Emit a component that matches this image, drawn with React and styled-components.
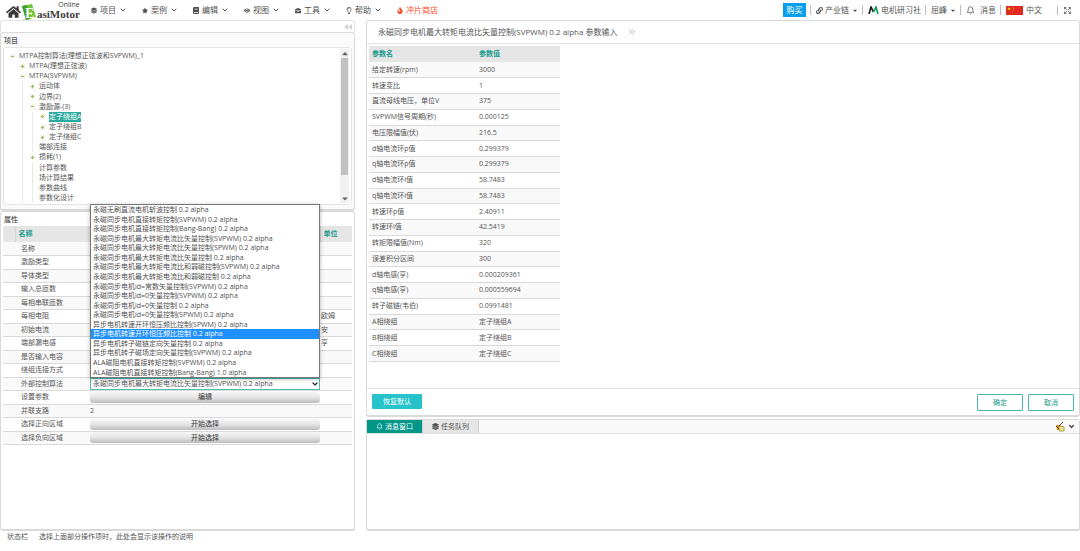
import { useState } from "react"
import styled, { createGlobalStyle, css } from "styled-components"
import { FaHome, FaStar, FaEye, FaBriefcase, FaRegLightbulb, FaFire, FaLayerGroup, FaBook, FaLink, FaCaretDown, FaCaretUp } from "react-icons/fa"
import { FiBell, FiChevronDown, FiChevronsRight } from "react-icons/fi"
import { TbArrowsMaximize } from "react-icons/tb"

const GlobalStyle = createGlobalStyle`
  * {
    box-sizing: border-box;
  }
  body {
    margin: 0;
    background: #fff;
  }
  body, button, select {
    color: #555;
    font-family: "Open Sans", "Noto Sans CJK SC", sans-serif;
    font-size: 7px;
    line-height: 10px;
  }
  button {
    padding: 0;
    border: 0;
    background: none;
    cursor: pointer;
  }
  a {
    color: inherit;
    text-decoration: none;
  }
  ul {
    margin: 0;
    padding: 0;
    list-style: none;
  }
`

const Page = styled.div`
  display: flex;
  flex-direction: column;
  min-height: 100vh;
`

/* top bar */
const TopBar = styled.header`
  display: flex;
  align-items: center;
  height: 20px;
  padding: 0 8px 0 6px;
  font-size: 8px;
`
const Brand = styled.a`
  display: flex;
  align-items: center;
  width: 85px;
  height: 20px;
  color: #3b3b3b;
`
const HomeIcon = styled(FaHome)`
  flex: none;
  width: 15px;
  height: 16px;
  margin-top: 4px;
`
const BrandTile = styled.svg`
  flex: none;
  width: 16px;
  height: 17px;
  margin-top: 3px;
`
const BrandText = styled.span`
  display: flex;
  flex-direction: column;
  align-items: flex-end;
`
const BrandSub = styled.small`
  font-size: 7px;
  line-height: 8px;
`
const BrandName = styled.strong`
  font-family: "Liberation Serif", serif;
  font-size: 11px;
  line-height: 10px;
`
const Menu = styled.nav`
  display: flex;
  flex: 1;
`
const MenuItem = styled.button`
  display: flex;
  align-items: center;
  gap: 3px;
  width: 51px;
  height: 20px;
  font-size: 8px;
  white-space: nowrap;
  color: ${({ $hot }) => ($hot ? "#ff4a26" : "#505050")};
  svg {
    width: 6px;
    height: 7px;
  }
  svg:last-child:not(:first-child) {
    width: 8px;
    height: 8px;
    stroke-width: 3;
  }
`
const Tools = styled.div`
  display: flex;
  align-items: center;
`
const BuyButton = styled.button`
  width: 23px;
  height: 14px;
  margin-right: 4px;
  background: #0a9fe9;
  color: #fff;
  font-size: 8px;
`
const Tool = styled.a`
  display: flex;
  align-items: center;
  gap: ${({ $gap }) => $gap || 2}px;
  padding: 0 ${({ $wide }) => ($wide ? 15 : 4)}px 0 5px;
  border-left: 1px solid #bbb;
  line-height: 10px;
  white-space: nowrap;
  &:last-child {
    padding-right: 0;
  }
`
const Caret = styled(FaCaretDown)`
  width: 6px;
  height: 7px;
  margin-left: 1px;
`

/* frame */
const Main = styled.main`
  display: flex;
  flex: 1;
  gap: 11px;
`
const SideColumn = styled.div`
  display: flex;
  flex-direction: column;
  flex: 0 0 355px;
`
const WorkColumn = styled.div`
  display: flex;
  flex-direction: column;
  flex: 1;
  gap: 2px;
  min-width: 0;
`
const Panel = styled.section`
  display: flex;
  flex-direction: column;
  flex: ${({ $grow }) => ($grow ? `${$grow} 1 0` : "none")};
  border: 1px solid #d9d9d9;
  border-width: 1px 1px 2px;
  border-radius: 3px;
  background: ${({ $tint }) => ($tint ? "#fafafa" : "#fff")};
`
const CollapseBar = styled.div`
  display: flex;
  justify-content: flex-end;
  align-items: center;
  height: 12px;
  padding-right: 2px;
  border: 1px solid #e4e4e4;
  border-bottom: 0;
  border-radius: 3px 3px 0 0;
  button {
    display: flex;
  }
`
const PanelTitle = styled.h2`
  margin: 0;
  padding: 3px 3px 1px;
  font-size: 7px;
  font-weight: 500;
  line-height: 10px;
`

/* project tree */
const TreeBox = styled.div`
  display: flex;
  justify-content: space-between;
  margin: 0 2px 4px;
  padding: 1px 2px 1px 5px;
  border: 1px solid #e6e6e6;
  border-radius: 3px;
  background: #fff;
`
const Tree = styled.ul`
  display: flex;
  flex-direction: column;
  height: 154px;
  padding-top: 2px;
`
const TreeRow = styled.li`
  display: flex;
  flex: 1;
  align-items: center;
  line-height: 10px;
  white-space: nowrap;
`
const Guide = styled.span`
  align-self: stretch;
  width: 10px;
  background: ${({ $line }) => ($line ? "linear-gradient(#e8e8e8, #e8e8e8) 3px 0 / 1px 100% no-repeat" : "none")};
`
const Toggle = styled.button`
  display: flex;
  width: 10px;
`
const TreeLabel = styled.span`
  ${({ $selected }) =>
    $selected &&
    css`
      background: #2ba99c;
      color: #fff;
    `}
`
const ScrollTrack = styled.div`
  display: flex;
  flex-direction: column;
  align-items: center;
  width: 9px;
  background: #f1f1f1;
  svg {
    width: 6px;
    height: 9px;
    color: #666;
  }
`
const ScrollThumb = styled.div`
  flex: 0 0 117px;
  width: 7px;
  margin-bottom: auto;
  background: #c1c1c1;
`

/* data tables */
const DataTable = styled.table`
  border-collapse: collapse;
  table-layout: fixed;
  th {
    height: 16px;
    padding: 0;
    background: #e5e5e5;
    color: #159a8c;
    font-weight: 700;
    text-align: left;
  }
  td {
    height: 13px;
    padding: 0;
    border-bottom: 1px solid #d9d9d9;
    line-height: 10px;
    white-space: nowrap;
  }
  tbody tr:nth-child(odd) {
    background: #f9f9f9;
  }
`
const PropTable = styled(DataTable)`
  width: calc(100% - 4px);
  height: 219px;
  margin: 0 2px;
  th {
    padding-left: 3px;
    border-left: 1px solid #d6d6d6;
  }
  th:first-child {
    border-left: 0;
  }
  td:nth-child(2) {
    padding-left: 6px;
  }
  td:last-child {
    padding-left: 1px;
  }
`
const ParamTable = styled(DataTable)`
  width: 191px;
  height: 316px;
  margin: 2px;
  th, td {
    padding-left: 3px;
  }
`
const GreyButton = styled.button`
  display: block;
  width: 230px;
  height: 11px;
  border-radius: 3px;
  background: linear-gradient(#f6f6f6, #e4e4e4 50%, #bdbdbd);
  color: #333;
`
const SelectWrap = styled.div`
  position: relative;
  display: flex;
  align-items: center;
  width: 230px;
`
const Select = styled.select`
  width: 100%;
  height: 12px;
  padding: 0 2px;
  border: 1px solid #4dbdb0;
  border-radius: 0;
  outline: 0;
  background: #fff;
  line-height: 10px;
  appearance: none;
`
const SelectArrow = styled(FiChevronDown)`
  position: absolute;
  right: 1px;
  width: 8px;
  height: 8px;
  stroke-width: 4;
  color: #333;
  pointer-events: none;
`
const OptionList = styled.ul`
  position: absolute;
  z-index: 2;
  bottom: 100%;
  left: 0;
  display: flex;
  flex-direction: column;
  width: 100%;
  height: 174px;
  border: 1px solid #777;
  background: #fff;
  box-shadow: 0 1px 4px rgba(0, 0, 0, 0.3);
`
const OptionRow = styled.li`
  display: flex;
  flex: 1;
  align-items: center;
  padding: 0 2px;
  line-height: 9px;
  background: ${({ $active }) => ($active ? "#1e90ff" : "transparent")};
  color: ${({ $active }) => ($active ? "#fff" : "#505050")};
`

/* parameter dialog */
const DialogTitle = styled.h1`
  display: flex;
  align-items: center;
  gap: 10px;
  height: 23px;
  margin: 0;
  padding: 0 11px;
  border-bottom: 1px solid #e4e4e4;
  font-size: 8px;
  font-weight: 400;
  svg {
    width: 10px;
    height: 10px;
    color: #aaa;
  }
`
const DialogFoot = styled.footer`
  display: flex;
  gap: 5px;
  align-items: flex-start;
  height: 27px;
  margin-top: auto;
  padding: 5px;
  border-top: 1px solid #e4e4e4;
`
const ResetButton = styled.button`
  width: 50px;
  height: 15px;
  margin-right: auto;
  border-radius: 1px;
  background: #26c3cb;
  color: #fff;
`
const OutlineButton = styled.button`
  width: 46px;
  height: 17px;
  border: 1px solid #4db6ac;
  border-radius: 1px;
  color: #159a8c;
`

/* message window */
const TabBar = styled.div`
  display: flex;
  align-items: center;
  height: 14px;
  padding-right: 4px;
  border-bottom: 1px solid #e0e0e0;
  background: #f9f9f9;
`
const Tab = styled.button`
  display: flex;
  align-items: center;
  justify-content: center;
  gap: 2px;
  width: 56px;
  height: 13px;
  border-right: 1px solid #d0d0d0;
  background: ${({ $active }) => ($active ? "#009688" : "#e6e6e6")};
  color: ${({ $active }) => ($active ? "#fff" : "#505050")};
  svg {
    width: 7px;
    height: 7px;
  }
`
const TabTools = styled.div`
  display: flex;
  gap: 3px;
  margin-left: auto;
  button {
    display: flex;
    align-items: center;
  }
`
const StatusBar = styled.footer`
  display: flex;
  gap: 11px;
  height: 20px;
  padding: 0 7px;
  line-height: 11px;
`

const menus = [
  { icon: FaLayerGroup, label: "项目" },
  { icon: FaStar, label: "案例" },
  { icon: FaBook, label: "编辑" },
  { icon: FaEye, label: "视图" },
  { icon: FaBriefcase, label: "工具" },
  { icon: FaRegLightbulb, label: "帮助" },
]

// depth, label, toggle sign
const treeRows = [
  [0, "MTPA控制算法(理想正弦波和SVPWM)_1", "-"],
  [1, "MTPA(理想正弦波)", "+"],
  [1, "MTPA(SVPWM)", "-"],
  [2, "运动体", "+"],
  [2, "边界(2)", "+"],
  [2, "激励源-(3)", "-"],
  [3, "定子绕组A", "+"],
  [3, "定子绕组B", "+"],
  [3, "定子绕组C", "+"],
  [2, "端部连接"],
  [2, "损耗(1)", "+"],
  [2, "计算参数"],
  [2, "场计算结果"],
  [2, "参数曲线"],
  [2, "参数化设计"],
]

const algorithms = [
  "永磁无刷直流电机斩波控制 0.2 alpha",
  "永磁同步电机直接转矩控制(SVPWM) 0.2 alpha",
  "永磁同步电机直接转矩控制(Bang-Bang) 0.2 alpha",
  "永磁同步电机最大转矩电流比矢量控制(SVPWM) 0.2 alpha",
  "永磁同步电机最大转矩电流比矢量控制(SPWM) 0.2 alpha",
  "永磁同步电机最大转矩电流比矢量控制 0.2 alpha",
  "永磁同步电机最大转矩电流比和弱磁控制(SVPWM) 0.2 alpha",
  "永磁同步电机最大转矩电流比和弱磁控制 0.2 alpha",
  "永磁同步电机id=常数矢量控制(SVPWM) 0.2 alpha",
  "永磁同步电机id=0矢量控制(SVPWM) 0.2 alpha",
  "永磁同步电机id=0矢量控制 0.2 alpha",
  "永磁同步电机id=0矢量控制(SPWM) 0.2 alpha",
  "异步电机转速开环恒压频比控制(SPWM) 0.2 alpha",
  "异步电机转速开环恒压频比控制 0.2 alpha",
  "异步电机转子磁链定向矢量控制 0.2 alpha",
  "异步电机转子磁场定向矢量控制(SVPWM) 0.2 alpha",
  "ALA磁阻电机直接转矩控制(SVPWM) 0.2 alpha",
  "ALA磁阻电机直接转矩控制(Bang-Bang) 1.0 alpha",
]

const props = [
  { name: "名称" },
  { name: "激励类型" },
  { name: "导体类型" },
  { name: "输入总匝数" },
  { name: "每相串联匝数" },
  { name: "每相电阻", unit: "欧姆" },
  { name: "初始电流", unit: "安" },
  { name: "端部漏电感", unit: "亨" },
  { name: "是否输入电容" },
  { name: "绕组连接方式" },
  { name: "外部控制算法", kind: "select" },
  { name: "设置参数", kind: "button", value: "编辑" },
  { name: "并联支路", value: "2" },
  { name: "选择正向区域", kind: "button", value: "开始选择" },
  { name: "选择负向区域", kind: "button", value: "开始选择" },
]

const params = [
  ["给定转速(rpm)", "3000"],
  ["转速变比", "1"],
  ["直流母线电压，单位V", "375"],
  ["SVPWM信号周期(秒)", "0.000125"],
  ["电压限幅值(伏)", "216.5"],
  ["d轴电流环p值", "0.299379"],
  ["q轴电流环p值", "0.299379"],
  ["d轴电流环i值", "58.7483"],
  ["q轴电流环i值", "58.7483"],
  ["转速环p值", "2.40911"],
  ["转速环i值", "42.5419"],
  ["转矩限幅值(Nm)", "320"],
  ["误差积分区间", "300"],
  ["d轴电感(亨)", "0.000209361"],
  ["q轴电感(亨)", "0.000559694"],
  ["转子磁链(韦伯)", "0.0991481"],
  ["A相绕组", "定子绕组A"],
  ["B相绕组", "定子绕组B"],
  ["C相绕组", "定子绕组C"],
]

const Logo = () => (
  <Brand href="#home">
    <HomeIcon />
    <BrandTile viewBox="0 0 16 17">
      <path d="M1 3 11 1l4 13-10 3z" fill="#6cc33c" />
      <path d="M1 3 6 2l3 14-4 1z" fill="#3fa02c" />
      <text x="4" y="15" fill="#fff" fontFamily="Liberation Serif" fontSize="14" fontWeight="700">E</text>
    </BrandTile>
    <BrandText>
      <BrandSub>Online</BrandSub>
      <BrandName>asiMotor</BrandName>
    </BrandText>
  </Brand>
)

const CommunityMark = () => (
  <svg width="11" height="8" viewBox="0 0 11 8" fill="none" strokeWidth="1.700">
    <path d="M1 8 3 1l2.500 5" stroke="#222" />
    <path d="M5.500 6 8 1l2 7" stroke="#12a05c" />
  </svg>
)

const Flag = () => (
  <svg width="17" height="9" viewBox="0 0 17 9">
    <path d="M0 0h17v9H0z" fill="#de2a20" />
    <path d="m3 1 .5 1.200h1.300l-1 .8.4 1.300L3 3.500l-1.200.8.4-1.300-1-.8h1.300z" fill="#ffde00" />
    <path d="M6 1h.7v.7H6zM7 2.200h.7v.7H7zM7 3.600h.7v.7H7zM6 4.700h.7v.7H6z" fill="#ffb300" />
  </svg>
)

const Sign = ({ open }) => (
  <svg width="7" height="7" viewBox="0 0 7 7">
    <path d="M1 1h5v5H1z" fill="#f1f3ec" />
    <path d={open ? "M2 3.500h3" : "M2 3.500h3M3.500 2v3"} stroke="#95c050" strokeWidth="1" />
  </svg>
)

const ClearIcon = () => (
  <svg width="10" height="10" viewBox="0 0 10 10">
    <path d="M1 3h4l2 2-3 3H2z" fill="#e0882a" />
    <path d="M4 4.500h5v4.500H4z" fill="#efe58a" stroke="#9a9430" strokeWidth=".8" />
    <path d="M4 4 8 0M1 4l3 3" stroke="#74420f" strokeWidth="1" />
  </svg>
)

const AlgorithmSelect = () => {
  const [value, setValue] = useState(algorithms[3])

  return (
    <SelectWrap>
      <Select id="algorithm" value={value} onChange={(e) => setValue(e.target.value)}>
        {algorithms.map((name) => <option key={name}>{name}</option>)}
      </Select>
      <SelectArrow />
      <OptionList role="listbox" aria-labelledby="algorithm-label">
        {algorithms.map((name, i) => (
          <OptionRow key={name} role="option" aria-selected={i === 13} $active={i === 13} onClick={() => setValue(name)}>
            {name}
          </OptionRow>
        ))}
      </OptionList>
    </SelectWrap>
  )
}

const PropValue = ({ item }) => {
  if (item.kind === "select") return <AlgorithmSelect />
  if (item.kind === "button") return <GreyButton>{item.value}</GreyButton>
  return item.value || null
}

const App = () => {
  const [selected, setSelected] = useState("定子绕组A")

  return (
    <Page>
      <GlobalStyle />
      <TopBar>
        <Logo />
        <Menu>
          {menus.map(({ icon: Icon, label }) => (
            <MenuItem key={label}><Icon />{label}<FiChevronDown /></MenuItem>
          ))}
          <MenuItem $hot><FaFire />冲片商店</MenuItem>
        </Menu>
        <Tools>
          <BuyButton>购买</BuyButton>
          <Tool href="#chain"><FaLink size={7} />产业链<Caret /></Tool>
          <Tool href="#community"><CommunityMark />电机研习社</Tool>
          <Tool href="#user">屈峰<Caret /></Tool>
          <Tool href="#message" $gap={5}><FiBell size={9} />消息</Tool>
          <Tool href="#language" $gap={3} $wide><Flag />中文</Tool>
          <Tool href="#fullscreen" aria-label="fullscreen"><TbArrowsMaximize size={9} /></Tool>
        </Tools>
      </TopBar>

      <Main>
        <SideColumn>
          <CollapseBar>
            <button aria-label="collapse">
              <svg width="8" height="6" viewBox="0 0 8 6" fill="#d4d4d4">
                <path d="M4 0 0 3l4 3zM8 0 4 3l4 3z" />
              </svg>
            </button>
          </CollapseBar>
          <Panel $tint>
            <PanelTitle>项目</PanelTitle>
            <TreeBox>
              <Tree>
                {treeRows.map(([depth, label, sign]) => (
                  <TreeRow key={label}>
                    {Array.from({ length: depth }, (_, i) => <Guide key={i} $line={i > 0} />)}
                    {sign ? <Toggle aria-label={label}><Sign open={sign === "-"} /></Toggle> : <Guide $line />}
                    <TreeLabel $selected={label === selected} onClick={() => setSelected(label)}>{label}</TreeLabel>
                  </TreeRow>
                ))}
              </Tree>
              <ScrollTrack>
                <FaCaretUp />
                <ScrollThumb />
                <FaCaretDown />
              </ScrollTrack>
            </TreeBox>
          </Panel>
          <Panel $grow={1}>
            <PanelTitle>属性</PanelTitle>
            <PropTable>
              <colgroup>
                <col width="12" />
                <col width="75" />
                <col width="230" />
                <col />
              </colgroup>
              <thead>
                <tr><th /><th>名称</th><th /><th>单位</th></tr>
              </thead>
              <tbody>
                {props.map((item) => (
                  <tr key={item.name}>
                    <td />
                    <td>
                      {item.kind === "select"
                        ? <label id="algorithm-label" htmlFor="algorithm">{item.name}</label>
                        : item.name}
                    </td>
                    <td><PropValue item={item} /></td>
                    <td>{item.unit}</td>
                  </tr>
                ))}
              </tbody>
            </PropTable>
          </Panel>
        </SideColumn>

        <WorkColumn>
          <Panel $grow={29}>
            <DialogTitle>
              永磁同步电机最大转矩电流比矢量控制(SVPWM) 0.2 alpha 参数输入
              <FiChevronsRight />
            </DialogTitle>
            <ParamTable>
              <colgroup>
                <col width="107" />
                <col />
              </colgroup>
              <thead>
                <tr><th>参数名</th><th>参数值</th></tr>
              </thead>
              <tbody>
                {params.map(([name, value]) => (
                  <tr key={name}><td>{name}</td><td>{value}</td></tr>
                ))}
              </tbody>
            </ParamTable>
            <DialogFoot>
              <ResetButton>恢复默认</ResetButton>
              <OutlineButton>确定</OutlineButton>
              <OutlineButton>取消</OutlineButton>
            </DialogFoot>
          </Panel>
          <Panel $grow={8}>
            <TabBar>
              <Tab $active><FiBell />消息窗口</Tab>
              <Tab><FaLayerGroup />任务队列</Tab>
              <TabTools>
                <button aria-label="clear"><ClearIcon /></button>
                <button aria-label="fold"><FiChevronDown size={7} strokeWidth={5} /></button>
              </TabTools>
            </TabBar>
          </Panel>
        </WorkColumn>
      </Main>

      <StatusBar>
        <span>状态栏</span>
        <span>选择上面部分操作项时，此处会显示该操作的说明</span>
      </StatusBar>
    </Page>
  )
}

export default App
